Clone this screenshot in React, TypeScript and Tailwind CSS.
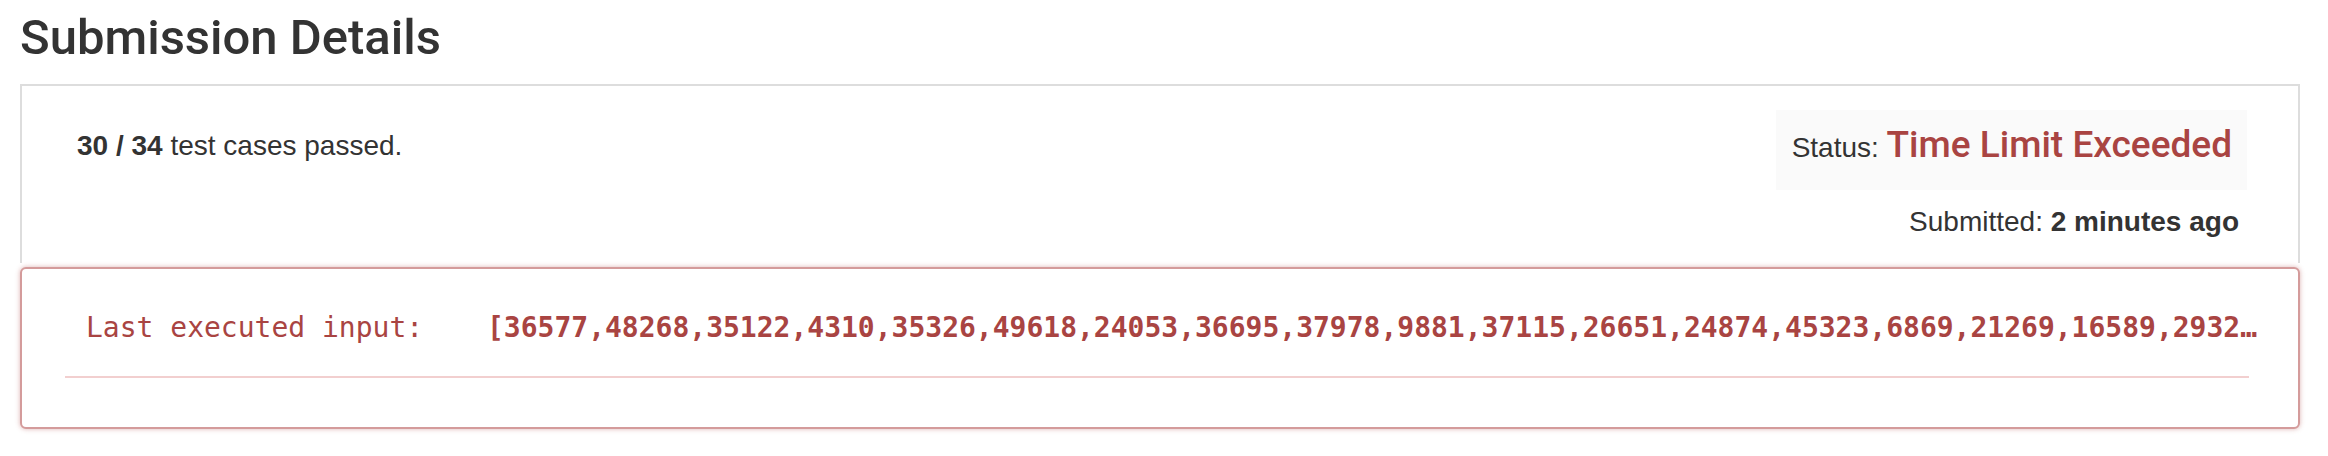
const INPUT_SHOWN =
  '[36577,48268,35122,4310,35326,49618,24053,36695,37978,9881,37115,26651,24874,45323,6869,21269,16589,2932…'

export default function App() {
  return (
    <div className="min-h-screen bg-white font-['Liberation_Sans',Arial,sans-serif] text-[#333]">
      <div className="ml-[20px] w-[2280px] pt-[10px]">
        <h3 className="font-['Roboto',sans-serif] text-[49px] leading-[55px] font-medium">
          Submission Details
        </h3>

        {/* summary panel */}
        <div className="mt-[19px] flex h-[179px] justify-between border-x-2 border-t-2 border-[#ddd] bg-white">
          <div className="pl-[55px] pt-[40px] text-[28px] leading-[40px]">
            <b>30 / 34</b> test cases passed.
          </div>
          <div className="flex flex-col items-end pr-[51px] pt-[24px]">
            <div className="bg-[#fafafa] pl-[16px] pr-[15px] pt-[15px] pb-[18px] leading-[40px]">
              <span className="text-[28px]">Status: </span>
              <span className="font-['Roboto',sans-serif] text-[37px] font-medium text-[#a94442]">
                Time Limit Exceeded
              </span>
            </div>
            <div className="mt-[12px] pr-[8px] text-[28px] leading-[40px]">
              Submitted: <b>2 minutes ago</b>
            </div>
          </div>
        </div>

        {/* last executed input */}
        <div className="mt-[4px] h-[162px] rounded-[6px] border-2 border-[#d49b9b] bg-white px-[43px] pt-[39px] shadow-[0_0_5px_rgba(169,68,66,0.4)]">
          <div className="flex pl-[21px] font-['DejaVu_Sans_Mono',monospace] text-[28px] leading-[40px] text-[#a94442]">
            <span className="w-[401px] shrink-0">Last executed input:</span>
            <span className="whitespace-nowrap font-bold">{INPUT_SHOWN}</span>
          </div>
          <div className="mt-[28px] h-[2px] w-[2184px] bg-[#f2cfcf]" />
        </div>
      </div>
    </div>
  )
}
